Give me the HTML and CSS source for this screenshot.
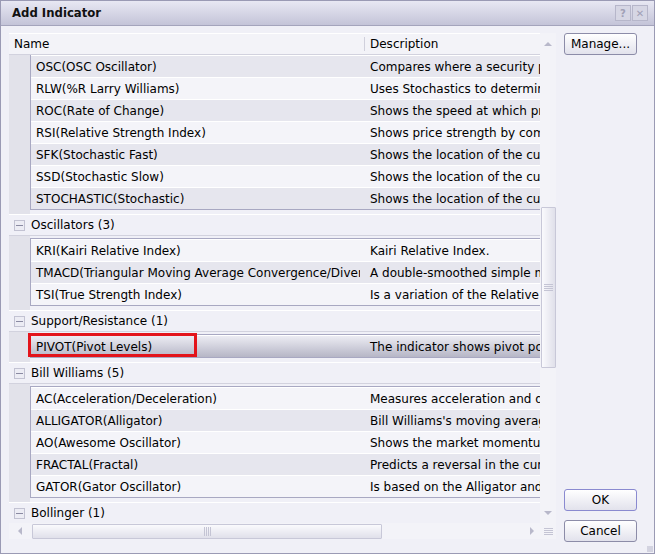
FILE: index.html
```html
<!DOCTYPE html>
<html lang="en">
  <head>
    <meta charset="UTF-8" />
    <title>Add Indicator</title>
    <link rel="stylesheet" href="styles.css">
  </head>
  <body>
    <div class="dialog">
      <div class="titlebar">
        <span class="title">Add Indicator</span>
        <span class="tbtn">?</span>
        <span class="tbtn">&#x2715;</span>
      </div>

      <div class="client">
        <div class="grid">
          <div class="viewport">
            <div class="header">
              <div class="hname">Name</div>
              <div class="hdesc">Description</div>
            </div>

            <!-- scrolled: first group header is above the view -->
            <div class="children top">
              <div class="items open">
                <div class="row alt"><div class="name">OSC(OSC Oscillator)</div><div class="desc">Compares where a security price closed</div></div>
                <div class="row"><div class="name">RLW(%R Larry Williams)</div><div class="desc">Uses Stochastics to determine overbought</div></div>
                <div class="row alt"><div class="name">ROC(Rate of Change)</div><div class="desc">Shows the speed at which price changes</div></div>
                <div class="row"><div class="name">RSI(Relative Strength Index)</div><div class="desc">Shows price strength by comparing closes</div></div>
                <div class="row alt"><div class="name">SFK(Stochastic Fast)</div><div class="desc">Shows the location of the current close</div></div>
                <div class="row"><div class="name">SSD(Stochastic Slow)</div><div class="desc">Shows the location of the current close</div></div>
                <div class="row alt"><div class="name">STOCHASTIC(Stochastic)</div><div class="desc">Shows the location of the current close</div></div>
              </div>
            </div>

            <div class="group"><span class="toggle"></span>Oscillators (3)</div>
            <div class="children">
              <div class="items">
                <div class="row"><div class="name">KRI(Kairi Relative Index)</div><div class="desc">Kairi Relative Index.</div></div>
                <div class="row alt"><div class="name">TMACD(Triangular Moving Average Convergence/Divergence)</div><div class="desc">A double-smoothed simple moving average</div></div>
                <div class="row"><div class="name">TSI(True Strength Index)</div><div class="desc">Is a variation of the Relative Strength</div></div>
              </div>
            </div>

            <div class="group"><span class="toggle"></span>Support/Resistance (1)</div>
            <div class="children">
              <div class="items">
                <div class="row sel"><div class="name">PIVOT(Pivot Levels)</div><div class="desc">The indicator shows pivot points</div><span class="mark"></span></div>
              </div>
            </div>

            <div class="group"><span class="toggle"></span>Bill Williams (5)</div>
            <div class="children">
              <div class="items">
                <div class="row"><div class="name">AC(Acceleration/Deceleration)</div><div class="desc">Measures acceleration and deceleration</div></div>
                <div class="row alt"><div class="name">ALLIGATOR(Alligator)</div><div class="desc">Bill Williams's moving average lines</div></div>
                <div class="row"><div class="name">AO(Awesome Oscillator)</div><div class="desc">Shows the market momentum</div></div>
                <div class="row alt"><div class="name">FRACTAL(Fractal)</div><div class="desc">Predicts a reversal in the current trend</div></div>
                <div class="row"><div class="name">GATOR(Gator Oscillator)</div><div class="desc">Is based on the Alligator and shows</div></div>
              </div>
            </div>

            <div class="group"><span class="toggle"></span>Bollinger (1)</div>
          </div>

          <div class="vscroll">
            <div class="vend"><span class="arr up"></span></div>
            <div class="vthumb"><span class="grip-h"></span></div>
            <div class="fill"></div>
            <div class="vend"><span class="arr down"></span></div>
          </div>

          <div class="hscroll">
            <div class="hend"><span class="arr left"></span></div>
            <div class="hthumb"><span class="grip-v"></span></div>
            <div class="fill"></div>
            <div class="hend"><span class="arr right"></span></div>
          </div>

          <div class="corner"><span class="grip-h"></span></div>
        </div>

        <div class="side">
          <button class="btn">Manage...</button>
          <button class="btn ok">OK</button>
          <button class="btn">Cancel</button>
        </div>
      </div>
      <span class="resize"></span>
    </div>
  </body>
</html>
```

FILE: styles.css
```css
body {
  margin: 0;
  background: #fff;
  font: 12px "DejaVu Sans", Verdana, sans-serif;
  color: #000;
}
.dialog {
  position: relative;
  box-sizing: border-box;
  width: 655px;
  height: 554px;
  border: 1px solid #9a9ab4;
  background: #f0f0f7;
  display: flex;
  flex-direction: column;
}
.titlebar {
  height: 24px;
  border-bottom: 1px solid #a4a4bc;
  background: linear-gradient(#e8e8f3, #c4c4d8);
  display: flex;
  align-items: center;
  padding: 0 6px 0 11px;
}
.title {
  flex: 1;
  font-weight: bold;
  font-size: 11.7px;
  color: #111;
}
.tbtn {
  box-sizing: border-box;
  width: 16px;
  height: 16px;
  margin-left: 1px;
  border: 1px solid #b6b6ca;
  background: #d6d6e4;
  color: #a0a0b6;
  font-size: 10px;
  font-weight: bold;
  display: flex;
  align-items: center;
  justify-content: center;
}
.client {
  flex: 1;
  display: flex;
  padding: 7px 0 0 8px;
}
.grid {
  display: grid;
  grid-template-columns: 531px 16px;
  grid-template-rows: 490px 16px;
}
.viewport {
  overflow: hidden;
  background: #f0f0f7;
}
.header {
  box-sizing: border-box;
  height: 22px;
  border-top: 1px solid #fff;
  border-bottom: 1px solid #d2d2de;
  background: #f3f3f8;
  display: flex;
  align-items: center;
}
.hname {
  box-sizing: border-box;
  width: 355px;
  padding-left: 5px;
}
.hdesc {
  padding-left: 5px;
  border-left: 1px solid #d0d0dc;
  line-height: 14px;
}
.children {
  padding: 2px 0 4px 21px;
  background: linear-gradient(to right, #e2e2ea 21px, #f0f0f7 21px);
}
.children.top {
  padding-top: 0;
}
.items {
  border: 1px solid #a8a8c2;
  border-right: none;
}
.items.open {
  border-top: none;
}
.row {
  position: relative;
  box-sizing: border-box;
  height: 22px;
  border-top: 1px solid #fff;
  background: #f4f4f9;
  display: flex;
  align-items: center;
  white-space: nowrap;
}
.row.alt {
  background: #e6e6ee;
}
.row.sel {
  background: linear-gradient(#ececf3, #b6b6c6);
}
.name {
  flex: none;
  box-sizing: border-box;
  width: 329px;
  margin-right: 4px;
  padding-left: 5px;
  overflow: hidden;
}
.desc {
  flex: none;
  padding-left: 6px;
}
.mark {
  position: absolute;
  left: -3px;
  top: -3px;
  box-sizing: border-box;
  width: 169px;
  height: 24px;
  border: 3px solid #e3141b;
}
.group {
  box-sizing: border-box;
  height: 22px;
  border-top: 1px solid #fff;
  border-bottom: 1px solid #d2d2de;
  padding-left: 5px;
  display: flex;
  align-items: center;
}
.toggle {
  box-sizing: border-box;
  width: 11px;
  height: 11px;
  margin-right: 6px;
  border: 1px solid #c2c2d2;
  background: #ececf4;
  display: flex;
  align-items: center;
  justify-content: center;
}
.toggle::before {
  content: "";
  width: 7px;
  height: 1px;
  background: #8a8aa2;
}
.vscroll {
  background: #f3f3f8;
  display: flex;
  flex-direction: column;
  align-items: center;
}
.vend {
  height: 22px;
  display: flex;
  align-items: center;
  justify-content: center;
}
.vscroll .vend:last-child {
  height: 20px;
}
.vthumb {
  box-sizing: border-box;
  width: 15px;
  height: 161px;
  margin-top: 152px;
  border: 1px solid #c8c8d8;
  border-radius: 1px;
  background: linear-gradient(to right, #fafafd, #e0e0ea);
  display: flex;
  align-items: center;
  justify-content: center;
}
.fill {
  flex: 1;
}
.hscroll {
  background: #f3f3f8;
  display: flex;
  align-items: center;
}
.hend {
  width: 22px;
  display: flex;
  align-items: center;
  justify-content: center;
}
.hscroll .hend:last-child {
  width: 16px;
}
.hthumb {
  box-sizing: border-box;
  width: 350px;
  height: 15px;
  margin-left: 1px;
  border: 1px solid #c8c8d8;
  border-radius: 1px;
  background: linear-gradient(#fafafd, #e0e0ea);
  display: flex;
  align-items: center;
  justify-content: center;
}
.corner {
  background: #f3f3f8;
  display: flex;
  align-items: center;
  justify-content: center;
}
.grip-h {
  width: 9px;
  height: 7px;
  background: repeating-linear-gradient(#c4c4d4 0 1px, transparent 1px 2px);
}
.grip-v {
  width: 7px;
  height: 9px;
  background: repeating-linear-gradient(to right, #c4c4d4 0 1px, transparent 1px 2px);
}
.arr {
  width: 0;
  height: 0;
  border: 4px solid transparent;
}
.arr.up {
  border-top: none;
  border-bottom-color: #b8b8ca;
}
.arr.down {
  border-bottom: none;
  border-top-color: #b8b8ca;
}
.arr.left {
  border-left: none;
  border-right-color: #b8b8ca;
}
.arr.right {
  border-right: none;
  border-left-color: #b8b8ca;
}
.side {
  margin-left: 8px;
  padding-bottom: 11px;
  width: 73px;
  display: flex;
  flex-direction: column;
}
.btn {
  box-sizing: border-box;
  height: 22px;
  border: 1px solid #8c8ca8;
  border-radius: 3px;
  background: linear-gradient(#ffffff, #e2e2ec);
  font: 12px "DejaVu Sans", Verdana, sans-serif;
  color: #000;
  padding: 0;
}
.btn.ok {
  margin-top: auto;
  margin-bottom: 9px;
  border-color: #8a8ad0;
}
.resize {
  position: absolute;
  right: 1px;
  bottom: 1px;
  width: 6px;
  height: 6px;
  background: radial-gradient(circle, #b0b0c4 0.6px, transparent 0.8px) 0 0 / 2px 2px;
}
```
